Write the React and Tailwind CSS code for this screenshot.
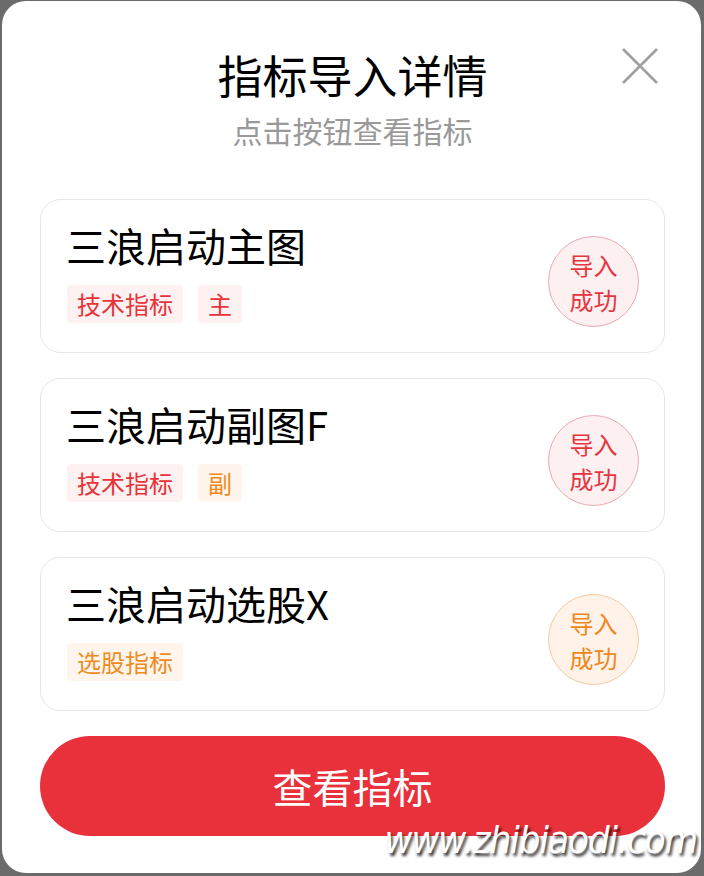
import React from 'react';

const FONT = { fontFamily: '"Noto Sans CJK SC", "Noto Sans", sans-serif' };

const TONES = {
    red: {
        tag: 'bg-[#fdf1f1] text-[#e8333a]',
        badge: 'bg-[#fdf0f1] border-[#e9aab0] text-[#e63540]',
    },
    orange: {
        tag: 'bg-[#fff5ec] text-[#f08a1c]',
        badge: 'bg-[#fff3e9] border-[#f6caa2] text-[#f0861c]',
    },
};

const indicators = [
    {
        name: '三浪启动主图',
        tags: [
            { label: '技术指标', tone: 'red' },
            { label: '主', tone: 'red' },
        ],
        badge: 'red',
    },
    {
        name: '三浪启动副图F',
        tags: [
            { label: '技术指标', tone: 'red' },
            { label: '副', tone: 'orange' },
        ],
        badge: 'red',
    },
    {
        name: '三浪启动选股X',
        tags: [{ label: '选股指标', tone: 'orange' }],
        badge: 'orange',
    },
];

const IndicatorCard = ({ item }) => (
    <div className="h-[154px] rounded-[20px] border border-[#e6e6e6] bg-white pl-[26px] pr-[25px] flex items-center justify-between">
        <div className="flex flex-col">
            <div className="text-[40px] leading-[40px] text-black mt-[-4px] -ml-[1px]">{item.name}</div>
            <div className="flex gap-[15px] mt-[20px]">
                {item.tags.map((tag) => (
                    <span
                        key={tag.label}
                        className={`h-[38px] px-[10px] rounded-[4px] flex items-center text-[24px] leading-none ${TONES[tag.tone].tag}`}
                    >
                        {tag.label}
                    </span>
                ))}
            </div>
        </div>
        <div
            className={`w-[91px] h-[91px] mt-[10px] rounded-full border flex flex-col items-center justify-center text-[24px] leading-[35px] pt-[2px] ${TONES[item.badge].badge}`}
        >
            <span>导入</span>
            <span>成功</span>
        </div>
    </div>
);

export default function App() {
    return (
        <div className="w-[704px] h-[876px] bg-[#6b6b6b] pt-[1px] pl-[2px] pr-[3px] pb-[3px]" style={FONT}>
            <div className="relative h-full rounded-[24px] bg-white pl-[38px] pr-[36px] pt-[52px] flex flex-col">
                {/* close button */}
                <button className="absolute right-[42px] top-[46px] w-[38px] h-[38px] text-[#a0a0a0]">
                    <svg viewBox="0 0 38 38" className="w-full h-full" fill="none" stroke="currentColor" strokeWidth="2.6">
                        <path d="M2 2 L36 36 M36 2 L2 36" />
                    </svg>
                </button>

                <h2 className="text-center text-[45px] leading-[44px] text-black font-normal">指标导入详情</h2>
                <p className="text-center text-[30px] leading-[30px] text-[#999999] mt-[18px]">点击按钮查看指标</p>

                <div className="flex flex-col gap-[25px] mt-[54px]">
                    {indicators.map((item) => (
                        <IndicatorCard key={item.name} item={item} />
                    ))}
                </div>

                <button className="mt-[25px] h-[100px] rounded-full bg-[#e8313a] text-white text-[40px] leading-none">
                    查看指标
                </button>

                {/* watermark */}
                <div
                    className="absolute right-[4px] bottom-[14px] text-[38px] leading-none italic text-white"
                    style={{
                        fontFamily: '"DejaVu Sans Condensed", "DejaVu Sans", sans-serif',
                        fontStretch: 'condensed',
                        letterSpacing: '-1px',
                        textShadow: '2px 3px 3px rgba(0,0,0,0.8)',
                    }}
                >
                    www.zhibiaodi.com
                </div>
            </div>
        </div>
    );
}
